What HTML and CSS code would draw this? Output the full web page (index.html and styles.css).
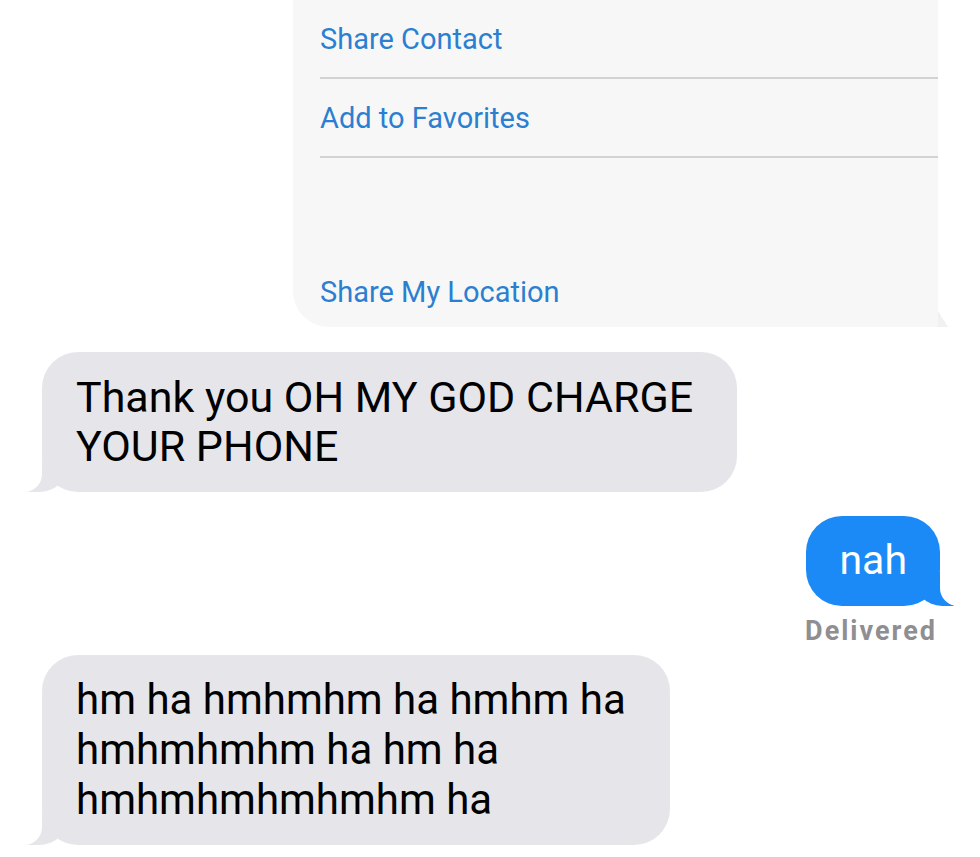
FILE: index.html
```html
<!DOCTYPE html>
<html lang="en">
<head>
    <meta charset="UTF-8">
    <meta name="viewport" content="width=device-width, initial-scale=1.0">
    <title>Messages</title>
    <link rel="stylesheet" href="styles.css">
</head>
<body>
    <div class="thread">
        <div class="contact-card">
            <div class="card-row">Share Contact</div>
            <div class="card-row">Add to Favorites</div>
            <div class="card-spacer"></div>
            <div class="card-row last">Share My Location</div>
        </div>

        <div class="bubble them">Thank you OH MY GOD CHARGE<br>YOUR PHONE</div>

        <div class="bubble me">nah</div>
        <div class="status">Delivered</div>

        <div class="bubble them long">hm ha hmhmhm ha hmhm ha<br>hmhmhmhm ha hm ha<br>hmhmhmhmhmhm ha</div>
    </div>
</body>
</html>
```

FILE: styles.css
```css
body {
    margin: 0;
    background-color: #fff;
    font-family: Roboto, "Liberation Sans", Arial, sans-serif;
}
.thread {
    display: flex;
    flex-direction: column;
    align-items: flex-start;
    width: 980px;
    height: 857px;
    overflow: hidden;
}
.contact-card {
    position: relative;
    margin-left: 293px;
    width: 645px;
    height: 327px;
    background-color: #f7f7f7;
    border-bottom-left-radius: 36px;
    display: flex;
    flex-direction: column;
    padding-left: 27px;
    box-sizing: border-box;
}
.contact-card::after {
    content: "";
    position: absolute;
    right: -10px;
    bottom: 0;
    width: 10px;
    height: 16px;
    background: linear-gradient(to bottom left, transparent 50%, #e8e8e8 50%);
    opacity: 0.6;
}
.card-row {
    height: 77px;
    display: flex;
    align-items: center;
    border-bottom: 2px solid #d2d2d2;
    color: #2b7fd1;
    font-size: 29px;
}
.card-row.last {
    border-bottom: none;
    height: 70px;
}
.card-spacer {
    flex: 1;
}
.bubble {
    position: relative;
    font-size: 43px;
    line-height: 49px;
    border-radius: 36px;
    padding: 21px 44px 21px 34px;
}
.them {
    margin-left: 42px;
    margin-top: 25px;
    background-color: #e5e5ea;
    color: #000;
}
.them.long {
    margin-top: 8px;
    font-size: 42px;
    line-height: 50px;
    padding: 20px 44px 20px 34px;
}
.them::before {
    content: "";
    position: absolute;
    bottom: 0;
    left: -14px;
    width: 40px;
    height: 34px;
    background-color: #e5e5ea;
    border-bottom-right-radius: 28px;
}
.them::after {
    content: "";
    position: absolute;
    bottom: 0;
    left: -22px;
    width: 22px;
    height: 34px;
    background-color: #fff;
    border-bottom-right-radius: 18px;
}
.me {
    align-self: flex-end;
    margin-right: 40px;
    margin-top: 24px;
    background-color: #1b8af6;
    color: #fff;
    font-size: 41px;
    padding: 20px 33px 21px;
}
.me::before {
    content: "";
    position: absolute;
    bottom: 0;
    right: -14px;
    width: 40px;
    height: 34px;
    background-color: #1b8af6;
    border-bottom-left-radius: 28px;
}
.me::after {
    content: "";
    position: absolute;
    bottom: 0;
    right: -22px;
    width: 22px;
    height: 34px;
    background-color: #fff;
    border-bottom-left-radius: 18px;
}
.status {
    align-self: flex-end;
    margin-right: 43px;
    margin-top: 9px;
    color: #8e8e93;
    font-size: 27px;
    font-weight: bold;
    letter-spacing: 2px;
}
```
